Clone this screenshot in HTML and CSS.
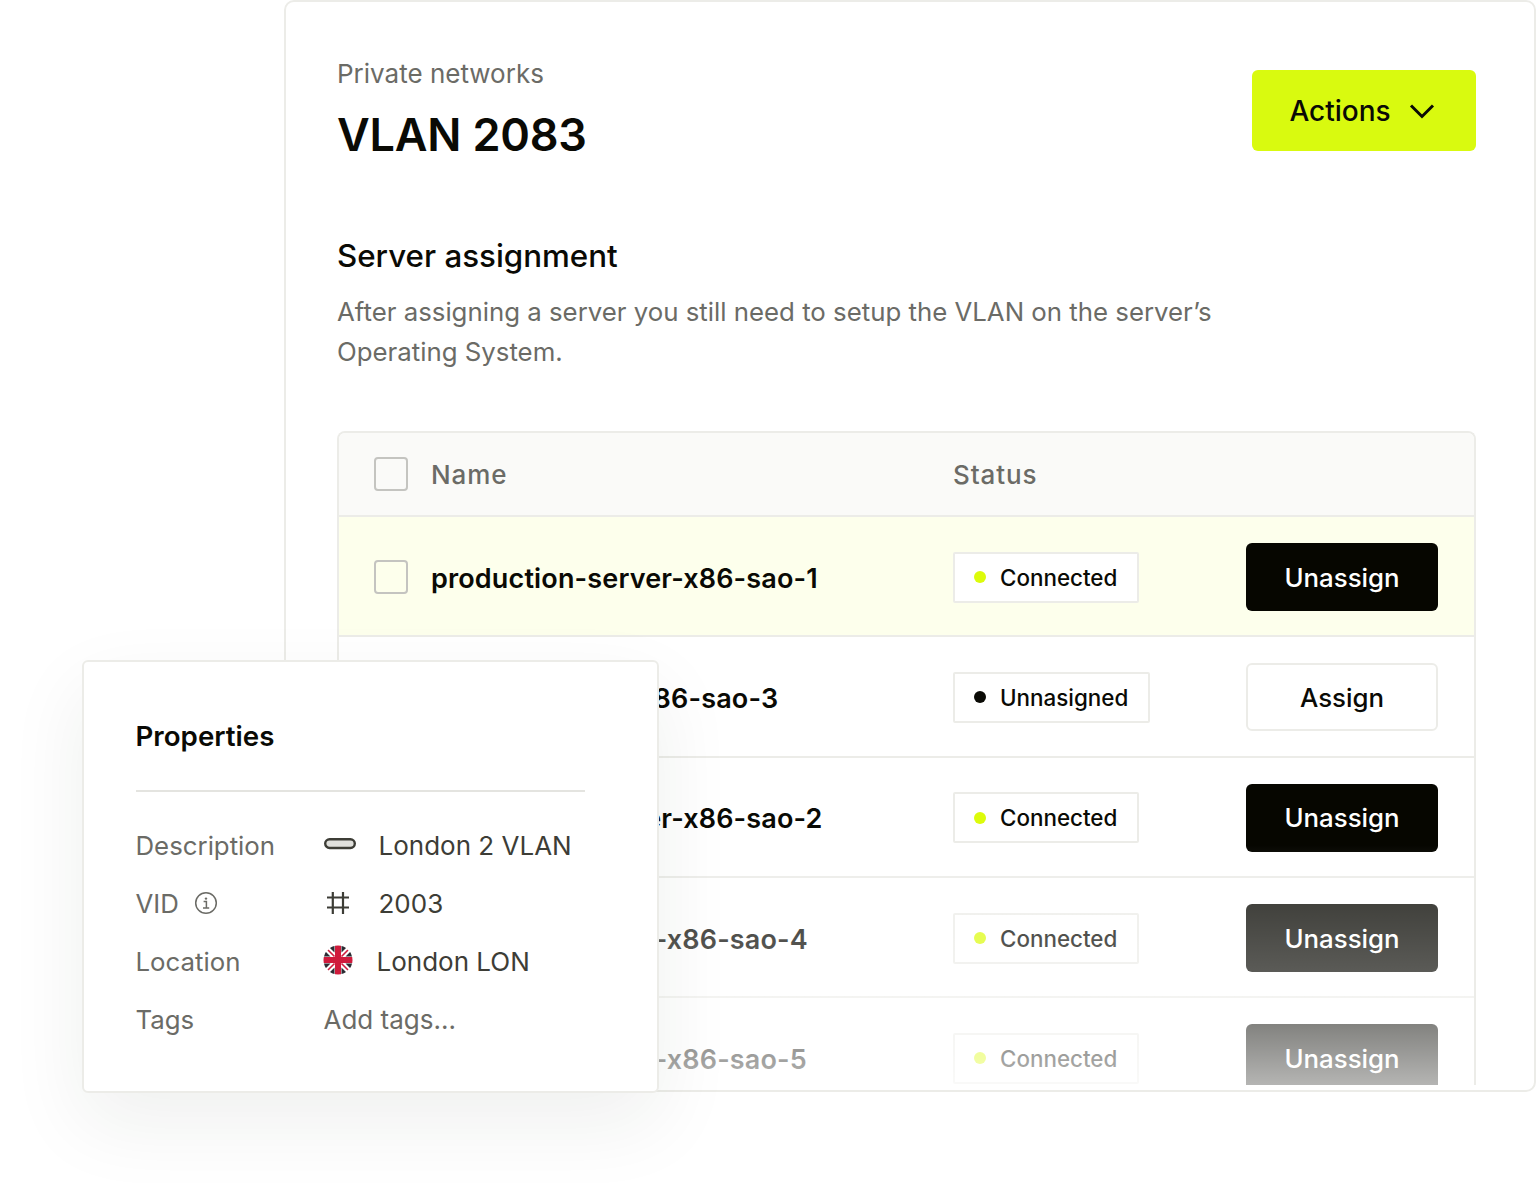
FILE: index.html
```html
<!DOCTYPE html>
<html lang="en">
<head>
<meta charset="utf-8">
<title>VLAN 2083</title>
<link rel="stylesheet" href="styles.css">
</head>
<body>
<div class="stage">
  <main class="panel">
    <header class="head">
      <div>
        <p class="crumb">Private networks</p>
        <h1 class="title">VLAN 2083</h1>
      </div>
      <button class="actions">Actions
        <svg class="chev" width="26" height="16" viewBox="0 0 26 16"><path d="M2 2.5 13 13.5 24 2.5" fill="none" stroke="#0a0a05" stroke-width="3"/></svg>
      </button>
    </header>
    <h2 class="section">Server assignment</h2>
    <p class="lead">After assigning a server you still need to setup the VLAN on the server’s<br>Operating System.</p>
    <section class="table">
      <div class="row headrow">
        <span class="check"></span>
        <span class="hname">Name</span>
        <span class="hname">Status</span>
      </div>
      <div class="row active">
        <span class="check"></span>
        <span class="name">production-server-x86-sao-1</span>
        <span class="cell"><span class="badge"><i class="dot"></i>Connected</span></span>
        <button class="btn dark">Unassign</button>
      </div>
      <div class="row">
        <span class="check"></span>
        <span class="name">staging-server-x86-sao-3</span>
        <span class="cell"><span class="badge"><i class="dot off"></i>Unnasigned</span></span>
        <button class="btn light">Assign</button>
      </div>
      <div class="row">
        <span class="check"></span>
        <span class="name">production-server-x86-sao-2</span>
        <span class="cell"><span class="badge"><i class="dot"></i>Connected</span></span>
        <button class="btn dark">Unassign</button>
      </div>
      <div class="row">
        <span class="check"></span>
        <span class="name">production-store-x86-sao-4</span>
        <span class="cell"><span class="badge"><i class="dot"></i>Connected</span></span>
        <button class="btn dark">Unassign</button>
      </div>
      <div class="row">
        <span class="check"></span>
        <span class="name">production-store-x86-sao-5</span>
        <span class="cell"><span class="badge"><i class="dot"></i>Connected</span></span>
        <button class="btn dark">Unassign</button>
      </div>
      <div class="fade"></div>
    </section>
  </main>
  <aside class="props">
    <h3 class="props-title">Properties</h3>
    <dl class="plist">
      <dt>Description</dt>
      <dd>
        <svg class="ico cable" width="32" height="14" viewBox="0 0 32 14"><rect x="1.200" y="2.200" width="29.600" height="8.800" rx="4.400" fill="#e0e0dc" stroke="#3d3d36" stroke-width="2.400"/></svg>
        London 2 VLAN
      </dd>
      <dt>VID
        <svg class="info" width="24" height="24" viewBox="0 0 24 24"><circle cx="12" cy="12" r="10.300" fill="none" stroke="#6b6b66" stroke-width="1.500"/><circle cx="12" cy="7.600" r="1.200" fill="#6b6b66"/><path d="M9.600 10.600H12.400V16.800M9 17H15.200" fill="none" stroke="#6b6b66" stroke-width="1.500"/></svg>
      </dt>
      <dd>
        <svg class="ico hash" width="32" height="26" viewBox="0 0 32 26"><path d="M8.800 2V24M19 2V24M3 7.500H25M3 17.500H25" fill="none" stroke="#3d3d36" stroke-width="2.200"/></svg>
        2003
      </dd>
      <dt>Location</dt>
      <dd>
        <svg class="ico flag" width="30" height="30" viewBox="0 0 30 30">
          <defs>
            <clipPath id="round"><circle cx="15" cy="15" r="14.500"/></clipPath>
            <g id="quad">
              <path d="M11.500 1V7.500L5.500 1.500ZM1 11.500H7.500L1.500 5.500Z" fill="#2b2b33"/>
              <path d="M11.500 11.500 5 5" stroke="#cf1b3c" stroke-width="1.600"/>
            </g>
          </defs>
          <g clip-path="url(#round)">
            <rect width="30" height="30" fill="#fff"/>
            <use href="#quad"/>
            <use href="#quad" transform="matrix(-1 0 0 1 30 0)"/>
            <use href="#quad" transform="matrix(1 0 0 -1 0 30)"/>
            <use href="#quad" transform="matrix(-1 0 0 -1 30 30)"/>
            <path d="M15 0V30M0 15H30" stroke="#cf1b3c" stroke-width="6"/>
          </g>
        </svg>
        <span class="lon">London LON</span>
      </dd>
      <dt>Tags</dt>
      <dd class="muted">Add tags...</dd>
    </dl>
  </aside>
</div>
</body>
</html>
```

FILE: styles.css
```css
* { box-sizing: border-box; }
html, body { margin: 0; padding: 0; background: #fff; }
body { font-family: Inter, "Liberation Sans", sans-serif; color: #0a0a05; }
.stage { position: relative; width: 1536px; height: 1183px; padding-left: 284px; overflow: hidden; }
.panel {
  width: 1252px; height: 1092px; display: flex; flex-direction: column;
  border: 2px solid #ecece8; border-radius: 10px; padding: 0 58px 5px 51px; background: #fff;
}
.head { display: flex; justify-content: space-between; align-items: flex-start; padding-top: 68px; height: 221px; }
.crumb { margin: -12px 0 0; font-size: 26px; line-height: 32px; color: #6b6b66; }
.title { margin: 17px 0 0; font-size: 45px; line-height: 56px; font-weight: 600; letter-spacing: -.2px; }
.actions {
  width: 224px; height: 81px; padding: 0 4px 0 0; border: 0; border-radius: 6px; background: #d9fa0f; color: #0a0a05;
  font: 450 28px Inter, sans-serif; display: flex; align-items: center; justify-content: center; gap: 18px;
}
.section { margin: 13px 0 0; font-size: 31.300px; line-height: 40px; font-weight: 500; }
.lead { margin: 16px 0 0; font-size: 25.800px; line-height: 40px; color: #6b6b66; }
.table {
  position: relative; flex: 1; margin-top: 59px; overflow: hidden;
  border: solid #ecece8; border-width: 2px 2px 0; border-radius: 8px 8px 0 0;
}
.row {
  display: grid; grid-template-columns: 34px 545px 1fr 192px;
  align-items: center; height: 120.300px; padding: 2px 36px 0 35px; border-bottom: 2px solid #ecece8;
}
.row > :nth-child(2) { margin-left: 23px; }
.headrow { height: 84px; padding-top: 0; background: #fafaf8; }
.active { background: #fdffec; }
.check { width: 34px; height: 34px; border: 2px solid #c4c4c0; border-radius: 4px; }
.hname { font-size: 26px; font-weight: 450; color: #6b6b66; letter-spacing: .9px; }
.name { font-size: 27px; font-weight: 600; white-space: nowrap; letter-spacing: .15px; margin-top: 2px; }
.badge {
  display: inline-flex; align-items: center; height: 51px; padding: 0 20px 0 19px; gap: 14px;
  border: 2px solid #ecece8; border-radius: 2px; background: #fff; font-size: 22.400px; font-weight: 450;
}
.dot { width: 12px; height: 12px; border-radius: 50%; background: #dcfb0b; }
.dot.off { background: #0a0a05; }
.btn { width: 192px; height: 68px; border-radius: 6px; font: 450 25.800px Inter, sans-serif; }
.dark { background: #060600; color: #fff; border: 0; }
.light { background: #fff; color: #0a0a05; border: 2px solid #ecece8; }
.fade {
  position: absolute; left: 0; right: 0; bottom: 0; height: 240px; pointer-events: none;
  background: linear-gradient(180deg, rgba(255,255,255,0) 0%, rgba(255,255,255,.24) 25%, rgba(255,255,255,.34) 53%, rgba(255,255,255,.5) 75%, rgba(255,255,255,.7) 100%);
}
.props {
  position: absolute; left: 82px; top: 660px; width: 577px; height: 433px; padding: 56px 72px 0 51.500px;
  background: #fff; border: 2px solid #ecece8; border-radius: 6px;
  box-shadow: 0 30px 80px rgba(30,40,30,.07);
}
.props-title { margin: 0; font-size: 27.700px; line-height: 36px; font-weight: 600; padding-bottom: 36px; border-bottom: 2px solid #e4e4e0; }
.plist { margin: 24px 0 0; display: grid; grid-template-columns: 188px 1fr; grid-auto-rows: 58px; align-items: center; font-size: 25.800px; }
.plist dt { color: #6b6b66; display: flex; align-items: center; gap: 15px; }
.plist dd { margin: 0; color: #3d3d36; font-size: 26px; display: flex; align-items: center; gap: 23px; white-space: nowrap; }
.plist dd.muted { color: #6b6b66; }
.ico { flex: none; }
.cable { margin-top: -2px; }
.flag { margin-left: -1px; margin-top: -2px; }
.lon { margin-left: 1px; }
```
